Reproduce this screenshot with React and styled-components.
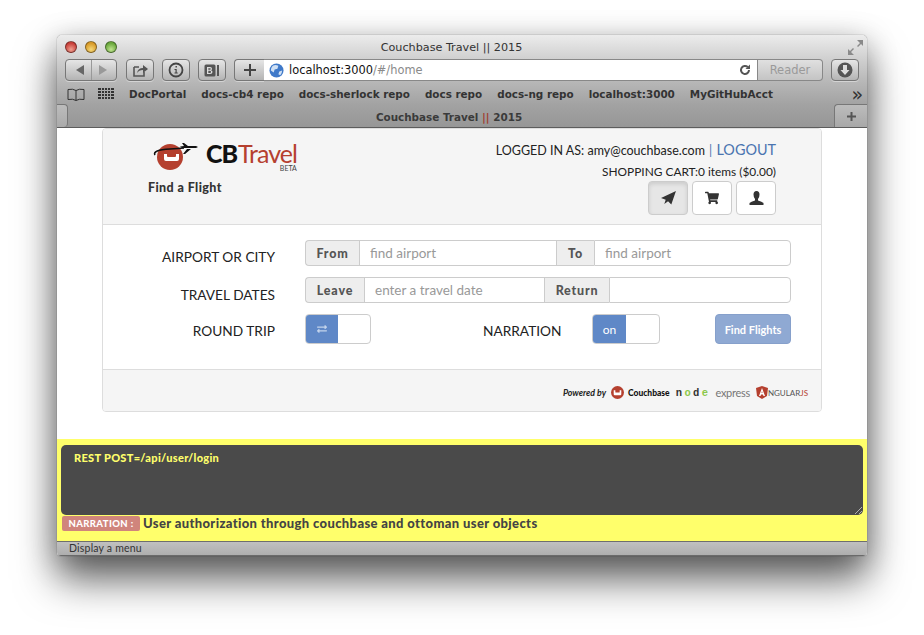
import React from 'react'
import styled, { createGlobalStyle } from 'styled-components'
import { FaShoppingCart, FaExchangeAlt } from 'react-icons/fa'

const GlobalStyle = createGlobalStyle`
  html, body { margin: 0; padding: 0; background: #fff; }
  body { width: 924px; height: 635px; overflow: hidden; font-family: "Lato", "Liberation Sans", sans-serif; }
  * { box-sizing: border-box; }
`

const chromeFont = '"DejaVu Sans", "Lato", sans-serif'

const Desktop = styled.div`
  width: 924px;
  height: 635px;
  padding: 35px 57px 79px;
`

const Window = styled.div`
  width: 810px;
  height: 521px;
  display: flex;
  flex-direction: column;
  border-radius: 5px 5px 4px 4px;
  overflow: hidden;
  box-shadow: 0 24px 40px rgba(0, 0, 0, 0.58), 0 0 1px rgba(0, 0, 0, 0.7), 0 6px 30px rgba(0, 0, 0, 0.25);
`

const Chrome = styled.div`
  height: 93px;
  flex: none;
  display: flex;
  flex-direction: column;
  background: linear-gradient(#ececec 0, #d2d2d2 22px, #b6b6b6 48px, #a2a2a2 70px, #969696 93px);
  border-bottom: 1px solid #5c5c5c;
  font-family: ${chromeFont};
`

const TitleBar = styled.div`
  height: 22px;
  flex: none;
  display: flex;
  align-items: center;
  padding: 2px 4px 0 8px;
`

const Lights = styled.div`
  display: flex;
  gap: 8px;
`

const Light = styled.span`
  width: 12px;
  height: 12px;
  border-radius: 50%;
  border: 1px solid rgba(0, 0, 0, 0.4);
  background: radial-gradient(circle at 50% 75%, ${p => p.$hi} 0, ${p => p.$c} 70%);
`

const Title = styled.div`
  flex: 1;
  text-align: center;
  font-size: 11.2px;
  color: #333;
  margin-right: 62px;
`

const ToolBar = styled.div`
  height: 24px;
  flex: none;
  margin-top: 1px;
  display: flex;
  align-items: center;
  padding: 0 8px;
`

const ToolButton = styled.div`
  height: 22px;
  width: ${p => p.$w || 28}px;
  margin-right: ${p => p.$mr ?? 8}px;
  flex: none;
  display: flex;
  align-items: center;
  justify-content: center;
  border: 1px solid #777;
  border-radius: 4px;
  background: linear-gradient(#e6e6e6, #b4b4b4);
  box-shadow: 0 1px 0 rgba(255, 255, 255, 0.4);
`

const BackForward = styled(ToolButton)`
  gap: 6px;
`

const Divider = styled.span`
  width: 1px;
  height: 20px;
  background: #999;
`

const PlusButton = styled(ToolButton)`
  border-radius: 4px 0 0 4px;
  border-right: none;
`

const AddressBar = styled.div`
  flex: none;
  width: 494px;
  height: 22px;
  display: flex;
  align-items: center;
  padding: 0 6px 0 5px;
  background: #fff;
  border: 1px solid #888;
  border-left: none;
  gap: 5px;
`

const Url = styled.div`
  flex: 1;
  font-size: 11.4px;
  color: #111;
`

const UrlRest = styled.span`
  color: #8a8a8a;
`

const ReaderButton = styled.div`
  flex: none;
  width: 65px;
  height: 22px;
  margin-right: 8px;
  display: flex;
  align-items: center;
  justify-content: center;
  border: 1px solid #888;
  border-left: none;
  border-radius: 0 4px 4px 0;
  background: linear-gradient(#e0e0e0, #c4c4c4);
  font-size: 11.5px;
  color: #9a9a9a;
`

const BookmarkBar = styled.div`
  height: 22px;
  flex: none;
  display: flex;
  align-items: center;
  padding: 2px 4px 0 10px;
`

const BookmarkIcons = styled.div`
  display: flex;
  align-items: center;
  gap: 13px;
  margin-right: 15px;
`

const Bookmark = styled.span`
  font-size: 10.4px;
  font-weight: 700;
  color: #333;
  margin-right: 15px;
  white-space: nowrap;
`

const Chevrons = styled.span`
  margin-left: auto;
  font-size: 19px;
  line-height: 16px;
  color: #333;
`

const TabBar = styled.div`
  flex: 1;
  display: flex;
  align-items: stretch;
`

const TabEdge = styled.div`
  width: 11px;
  flex: none;
  background: linear-gradient(#bcbcbc, #aaaaaa);
  border: 1px solid #777;
  border-left: none;
  border-bottom: none;
  border-radius: 0 4px 4px 0;
`

const TabTitle = styled.div`
  flex: 1;
  text-align: center;
  font-size: 10.4px;
  font-weight: 700;
  line-height: 20px;
  color: #3a3a3a;
  padding: 3px 4px 0 0;
`

const TabBars = styled.span`
  color: #a04030;
`

const NewTab = styled.div`
  width: 33px;
  flex: none;
  display: flex;
  align-items: center;
  justify-content: center;
  background: linear-gradient(#bcbcbc, #a8a8a8);
  border: 1px solid #777;
  border-right: none;
  border-bottom: none;
  border-radius: 4px 0 0 0;
`

const Page = styled.div`
  flex: 1;
  min-height: 0;
  display: flex;
  flex-direction: column;
  background: #fff;
`

const PageTop = styled.div`
  flex: 1;
  padding: 0 45px;
`

const Card = styled.div`
  width: 720px;
  height: 284px;
  border: 1px solid #ddd;
  border-radius: 4px;
  display: flex;
  flex-direction: column;
  overflow: hidden;
`

const CardHeader = styled.div`
  height: 96px;
  flex: none;
  display: flex;
  justify-content: space-between;
  background: #f5f5f5;
  border-bottom: 1px solid #ddd;
  padding: 0 45px;
`

const Brand = styled.div`
  display: flex;
  flex-direction: column;
`

const LogoRow = styled.div`
  display: flex;
  align-items: flex-start;
  margin: 12px 0 0 4px;
`

const LogoWords = styled.div`
  display: flex;
  flex-direction: column;
  align-items: flex-end;
  margin-left: 8px;
`

const LogoText = styled.div`
  line-height: 25px;
  font-size: 25px;
  white-space: nowrap;
  letter-spacing: -1px;
`

const LogoCb = styled.span`
  font-weight: 900;
  color: #111;
  margin-right: 1px;
`

const LogoTravel = styled.span`
  color: #b5402f;
`

const Beta = styled.div`
  font-size: 7px;
  line-height: 8px;
  margin-top: -2px;
  color: #444;
`

const FindTitle = styled.div`
  margin-top: 8px;
  font-size: 12.5px;
  font-weight: 900;
  color: #333;
  letter-spacing: 0.4px;
`

const Account = styled.div`
  display: flex;
  flex-direction: column;
  align-items: flex-end;
  font-size: 12.5px;
  color: #222;
`

const LoginLine = styled.div`
  margin-top: 12px;
  line-height: 18px;
  white-space: nowrap;
`

const LogoutLink = styled.span`
  color: #4a74b0;
  font-size: 14.4px;
`

const Sep = styled.span`
  color: #4a74b0;
  margin: 0 1px;
`

const CartLine = styled.div`
  line-height: 18px;
  margin-top: 3px;
  font-size: 11.9px;
  white-space: nowrap;
`

const NavButtons = styled.div`
  display: flex;
  gap: 4px;
`

const NavButton = styled.div`
  width: 40px;
  height: 34px;
  display: flex;
  align-items: center;
  justify-content: center;
  border: 1px solid #ccc;
  border-radius: 4px;
  color: #333;
  background: ${p => (p.$active ? '#e6e6e6' : '#fff')};
  box-shadow: ${p => (p.$active ? 'inset 0 2px 4px rgba(0,0,0,0.12)' : 'none')};
`

const Form = styled.div`
  flex: 1;
  padding-top: 15px;
  background: #fff;
`

const FormRow = styled.div`
  display: flex;
  align-items: center;
  height: ${p => p.$h}px;
  margin-bottom: ${p => p.$mb}px;
`

const FieldLabel = styled.div`
  width: 172px;
  flex: none;
  margin-right: 30px;
  text-align: right;
  font-size: 13.7px;
  color: #222;
  padding-top: ${p => p.$pt || 0}px;
  white-space: nowrap;
`

const InputGroup = styled.div`
  width: 486px;
  height: 100%;
  display: flex;
`

const Addon = styled.div`
  flex: none;
  width: ${p => p.$w}px;
  display: flex;
  align-items: center;
  justify-content: center;
  background: #eee;
  border: 1px solid #ccc;
  border-right: none;
  border-radius: ${p => (p.$first ? '4px 0 0 4px' : '0')};
  font-size: 12.5px;
  font-weight: 900;
  letter-spacing: 0.8px;
  color: #555;
`

const TextInput = styled.input`
  flex: ${p => (p.$w ? 'none' : '1')};
  width: ${p => (p.$w ? `${p.$w}px` : 'auto')};
  min-width: 0;
  height: 100%;
  padding: 0 10px;
  border: 1px solid #ccc;
  border-right: ${p => (p.$last ? '1px solid #ccc' : 'none')};
  border-radius: ${p => (p.$last ? '0 4px 4px 0' : '0')};
  background: #fff;
  outline: none;
  font-family: "Lato", sans-serif;
  font-size: 13.5px;
  &::placeholder { color: #999; opacity: 1; }
`

const Toggle = styled.div`
  width: ${p => p.$w}px;
  height: 30px;
  flex: none;
  display: flex;
  border: 1px solid #ccc;
  border-radius: 4px;
  overflow: hidden;
  background: #fff;
`

const ToggleOn = styled.div`
  width: ${p => p.$w}px;
  display: flex;
  align-items: center;
  justify-content: center;
  background: #5f88c7;
  color: #fff;
  font-size: 12px;
`

const NarrationLabel = styled.div`
  margin-left: 112px;
  width: 109px;
  flex: none;
  font-size: 13.7px;
  color: #222;
  padding-top: 3px;
`

const FindButton = styled.div`
  margin-left: 55px;
  width: 76px;
  height: 30px;
  flex: none;
  display: flex;
  align-items: center;
  justify-content: center;
  background: #8fa9d3;
  border: 1px solid #86a0cb;
  border-radius: 4px;
  color: #fff;
  font-size: 11px;
  font-weight: 700;
`

const CardFooter = styled.div`
  height: 42px;
  flex: none;
  display: flex;
  align-items: center;
  justify-content: flex-end;
  gap: 5px;
  padding: 4px 13px 0 0;
  background: #f5f5f5;
  border-top: 1px solid #ddd;
`

const PoweredBy = styled.span`
  font-size: 8.8px;
  font-weight: 700;
  font-style: italic;
  color: #222;
`

const CouchbaseMark = styled.span`
  display: flex;
  align-items: center;
  gap: 4px;
  font-size: 8.5px;
  font-weight: 900;
  color: #111;
`

const NodeMark = styled.span`
  font-family: "Liberation Mono", monospace;
  font-size: 10.5px;
  font-weight: 700;
  letter-spacing: 2.4px;
  color: #333;
  margin-left: 1px;
`

const NodeE = styled.span`
  color: #8cc84b;
`

const ExpressMark = styled.span`
  font-size: 11px;
  letter-spacing: -0.3px;
  color: #777;
  margin-right: 1px;
`

const AngularMark = styled.span`
  display: flex;
  align-items: center;
  font-size: 8px;
  color: #555;
`

const AngularJs = styled.span`
  color: #b5402f;
`

const Console = styled.div`
  height: 102px;
  flex: none;
  padding: 6px 4px 0;
  background: #ffff6b;
`

const ConsoleBox = styled.div`
  position: relative;
  height: 70px;
  padding: 6px 13px;
  background: #4a4a4a;
  border-radius: 5px;
  font-size: 11px;
  font-weight: 900;
  letter-spacing: 0.3px;
  color: #ffff6b;
`

const Grip = styled.svg`
  position: absolute;
  right: 1px;
  bottom: 1px;
`

const NarrationLine = styled.div`
  display: flex;
  align-items: center;
  gap: 3px;
  height: 15px;
  margin: 1px 0 0 1px;
`

const NarrationBadge = styled.span`
  width: 78px;
  height: 15px;
  display: flex;
  align-items: center;
  justify-content: center;
  background: #d0857c;
  border-radius: 2px;
  font-size: 9.5px;
  font-weight: 900;
  letter-spacing: 0.4px;
  color: #fff;
`

const NarrationText = styled.span`
  font-size: 13px;
  line-height: 14px;
  font-weight: 900;
  letter-spacing: 0.37px;
  color: #444;
  margin-bottom: 2px;
`

const StatusBar = styled.div`
  height: 15px;
  flex: none;
  padding-left: 12px;
  border-top: 1px solid #6e6e6e;
  border-bottom: 1px solid #6a6a6a;
  background: linear-gradient(#c0c0c0, #aeaeae);
  font-size: 10.5px;
  line-height: 12px;
  letter-spacing: 0.2px;
  color: #333;
`

const bookmarks = ['DocPortal', 'docs-cb4 repo', 'docs-sherlock repo', 'docs repo', 'docs-ng repo', 'localhost:3000', 'MyGitHubAcct']

const CouchIcon = ({ size }) => (
  <svg width={size} height={size} viewBox="0 0 24 24">
    <circle cx="12" cy="12" r="12" fill="#b5402f" />
    <path d="M5 9v7q0 2 2 2h10q2 0 2-2V9h-3v3q0 1-1 1H9q-1 0-1-1V9z" fill="#fff" transform="translate(0 -1)" />
  </svg>
)

const App = () => (
  <>
    <GlobalStyle />
    <Desktop>
      <Window>
        <Chrome>
          <TitleBar>
            <Lights>
              <Light $c="#c8403a" $hi="#f0a090" />
              <Light $c="#d89a28" $hi="#f5d878" />
              <Light $c="#6aa83c" $hi="#c0e490" />
            </Lights>
            <Title>Couchbase Travel || 2015</Title>
            <svg width="15" height="15" viewBox="0 0 15 15">
              <path d="M9 0h6v6l-2-2-3 3-1-1 3-3zM6 15H0V9l2 2 3-3 1 1-3 3z" fill="#8a8a8a" />
            </svg>
          </TitleBar>
          <ToolBar>
            <BackForward $w={52} $mr={9}>
              <svg width="10" height="10" viewBox="0 0 10 10"><path d="M9 0v10L1 5z" fill="#666" /></svg>
              <Divider />
              <svg width="10" height="10" viewBox="0 0 10 10"><path d="M1 0v10l8-5z" fill="#999" /></svg>
            </BackForward>
            <ToolButton>
              <svg width="16" height="14" viewBox="0 0 16 14">
                <path d="M2 4h5M2 4v9h10V9" fill="none" stroke="#555" strokeWidth="1.6" />
                <path d="M5 10q1-5 6-5V2l5 4-5 4V7q-4 0-6 3z" fill="#555" />
              </svg>
            </ToolButton>
            <ToolButton>
              <svg width="16" height="16" viewBox="0 0 16 16">
                <circle cx="8" cy="8" r="6.5" fill="none" stroke="#444" strokeWidth="1.8" />
                <path d="M6.5 7h2.2v3.5h1v1H6.5v-1h1V8h-1zM7.5 4h1.4v1.6H7.5z" fill="#444" />
              </svg>
            </ToolButton>
            <ToolButton>
              <svg width="16" height="13" viewBox="0 0 16 13">
                <rect x="0.5" y="0.5" width="11" height="12" rx="1.5" fill="#555" />
                <path d="M3 3h3q2 0 2 1.700 0 1-1 1.500 1.500.4 1.500 1.800 0 2-2.500 2H3zM4.300 4.200v1.500H6q.8 0 .8-.8t-.8-.7zM4.300 6.800v2.100H6q1 0 1-1t-1-1.100z" fill="#ddd" />
                <rect x="13" y="1" width="2" height="11" fill="#555" />
              </svg>
            </ToolButton>
            <PlusButton $w={30} $mr={0}>
              <svg width="12" height="12" viewBox="0 0 12 12"><path d="M5 0h2v5h5v2H7v5H5V7H0V5h5z" fill="#444" /></svg>
            </PlusButton>
            <AddressBar>
              <svg width="15" height="15" viewBox="0 0 16 16">
                <circle cx="8" cy="8" r="7.500" fill="#3f79c9" />
                <path d="M4 3q3-2 6 0l-1 3-3 1-1 3-3-2q0-3 2-5zM11 9l3-1q0 3-2 5l-2-1z" fill="#cfe0f4" />
              </svg>
              <Url>localhost:3000<UrlRest>/#/home</UrlRest></Url>
              <svg width="12" height="12" viewBox="0 0 24 24">
                <path d="M20 12a8 8 0 1 1-2.500-5.800" fill="none" stroke="#555" strokeWidth="4" />
                <path d="M22 1v9h-9z" fill="#555" />
              </svg>
            </AddressBar>
            <ReaderButton>Reader</ReaderButton>
            <ToolButton $mr={0}>
              <svg width="16" height="16" viewBox="0 0 16 16">
                <circle cx="8" cy="8" r="7.500" fill="#555" />
                <path d="M6 3h4v5h2.500L8 13 3.500 8H6z" fill="#ddd" />
              </svg>
            </ToolButton>
          </ToolBar>
          <BookmarkBar>
            <BookmarkIcons>
              <svg width="18" height="13" viewBox="0 0 18 13">
                <path d="M9 2.500Q6 .5 1 1.500v10q5-1 8 1 3-2 8-1v-10q-5-1-8 1zM9 2.500v10" fill="none" stroke="#333" />
              </svg>
              <svg width="16" height="12" viewBox="0 0 16 12">
                <path d="M0 0h16v2H0zM0 3h16v2H0zM0 6h16v2H0zM0 9h16v2H0z" fill="#333" />
                <path d="M3 0h1v12H3zM6 0h1v12H6zM9 0h1v12H9zM12 0h1v12h-1z" fill="#a8a8a8" />
              </svg>
            </BookmarkIcons>
            {bookmarks.map(b => <Bookmark key={b}>{b}</Bookmark>)}
            <Chevrons>»</Chevrons>
          </BookmarkBar>
          <TabBar>
            <TabEdge />
            <TabTitle>Couchbase Travel <TabBars>||</TabBars> 2015</TabTitle>
            <NewTab>
              <svg width="9" height="9" viewBox="0 0 9 9"><path d="M3.500 0h2v3.500H9v2H5.500V9h-2V5.500H0v-2h3.500z" fill="#555" /></svg>
            </NewTab>
          </TabBar>
        </Chrome>
        <Page>
          <PageTop>
            <Card>
              <CardHeader>
                <Brand>
                  <LogoRow>
                    <svg width="46" height="30" viewBox="0 0 46 30">
                      <circle cx="18" cy="16" r="13" fill="#b5402f" />
                      <path d="M12 13v5q0 2 2 2h11q2 0 2-2v-5h-3v2q0 1-1 1h-7q-1 0-1-1v-2z" fill="#fff" />
                      <path d="M3 14Q0 9 18 8q8-.5 14-1" fill="none" stroke="#111" strokeWidth="1.600" />
                      <path d="M30 7h14l2-1-2-1h-8l-4-3h-2l2 3-4 .5zM35 8l-4 5h2l6-5z" fill="#111" />
                    </svg>
                    <LogoWords>
                      <LogoText><LogoCb>CB</LogoCb><LogoTravel>Travel</LogoTravel></LogoText>
                      <Beta>BETA</Beta>
                    </LogoWords>
                  </LogoRow>
                  <FindTitle>Find a Flight</FindTitle>
                </Brand>
                <Account>
                  <LoginLine>LOGGED IN AS: amy@couchbase.com <Sep>|</Sep> <LogoutLink>LOGOUT</LogoutLink></LoginLine>
                  <CartLine>SHOPPING CART:0 items ($0.00)</CartLine>
                  <NavButtons>
                    <NavButton $active>
                      <svg width="15" height="14" viewBox="0 0 16 15">
                        <path d="M16 0 0 7.500l5 1.800L3.500 14l4-3 3.500 3.500z" fill="#333" />
                      </svg>
                    </NavButton>
                    <NavButton><FaShoppingCart size={14} /></NavButton>
                    <NavButton>
                      <svg width="15" height="14" viewBox="0 0 15 14">
                        <path d="M7.500 0q3 0 3 3.500 0 3-1.500 4.500v1.500q4 1 5.500 2.500V14H.5v-2q1.500-1.500 5.500-2.500V8Q4.500 6.500 4.500 3.500q0-3.500 3-3.500z" fill="#333" />
                      </svg>
                    </NavButton>
                  </NavButtons>
                </Account>
              </CardHeader>
              <Form>
                <FormRow $h={26} $mb={11}>
                  <FieldLabel $pt={7}>AIRPORT OR CITY</FieldLabel>
                  <InputGroup>
                    <Addon $w={54} $first>From</Addon>
                    <TextInput $w={197} placeholder="find airport" />
                    <Addon $w={38}>To</Addon>
                    <TextInput $last placeholder="find airport" />
                  </InputGroup>
                </FormRow>
                <FormRow $h={26} $mb={11}>
                  <FieldLabel $pt={9}>TRAVEL DATES</FieldLabel>
                  <InputGroup>
                    <Addon $w={59} $first>Leave</Addon>
                    <TextInput $w={180} placeholder="enter a travel date" />
                    <Addon $w={65}>Return</Addon>
                    <TextInput $last />
                  </InputGroup>
                </FormRow>
                <FormRow $h={30} $mb={0}>
                  <FieldLabel $pt={3}>ROUND TRIP</FieldLabel>
                  <Toggle $w={66}>
                    <ToggleOn $w={32}><FaExchangeAlt size={10} color="#c4d4ec" /></ToggleOn>
                  </Toggle>
                  <NarrationLabel>NARRATION</NarrationLabel>
                  <Toggle $w={68}>
                    <ToggleOn $w={33}>on</ToggleOn>
                  </Toggle>
                  <FindButton>Find Flights</FindButton>
                </FormRow>
              </Form>
              <CardFooter>
                <PoweredBy>Powered by</PoweredBy>
                <CouchbaseMark><CouchIcon size={13} />Couchbase</CouchbaseMark>
                <NodeMark>n<NodeE>o</NodeE>d<NodeE>e</NodeE></NodeMark>
                <ExpressMark>express</ExpressMark>
                <AngularMark>
                  <svg width="12" height="13" viewBox="0 0 12 13">
                    <path d="M6 0 12 2l-1 8-5 3-5-3-1-8z" fill="#b5402f" />
                    <path d="M6 2 3 10h1.500L5 8.500h2L7.500 10H9zM5.500 7 6 5l.5 2z" fill="#fff" />
                  </svg>
                  NGULAR<AngularJs>JS</AngularJs>
                </AngularMark>
              </CardFooter>
            </Card>
          </PageTop>
          <Console>
            <ConsoleBox>
              REST POST=/api/user/login
              <Grip width="8" height="8" viewBox="0 0 8 8">
                <path d="M1 8l7-7M5 8l3-3" stroke="#ccc" strokeWidth="0.8" />
              </Grip>
            </ConsoleBox>
            <NarrationLine>
              <NarrationBadge>NARRATION :</NarrationBadge>
              <NarrationText>User authorization through couchbase and ottoman user objects</NarrationText>
            </NarrationLine>
          </Console>
          <StatusBar>Display a menu</StatusBar>
        </Page>
      </Window>
    </Desktop>
  </>
)

export default App
